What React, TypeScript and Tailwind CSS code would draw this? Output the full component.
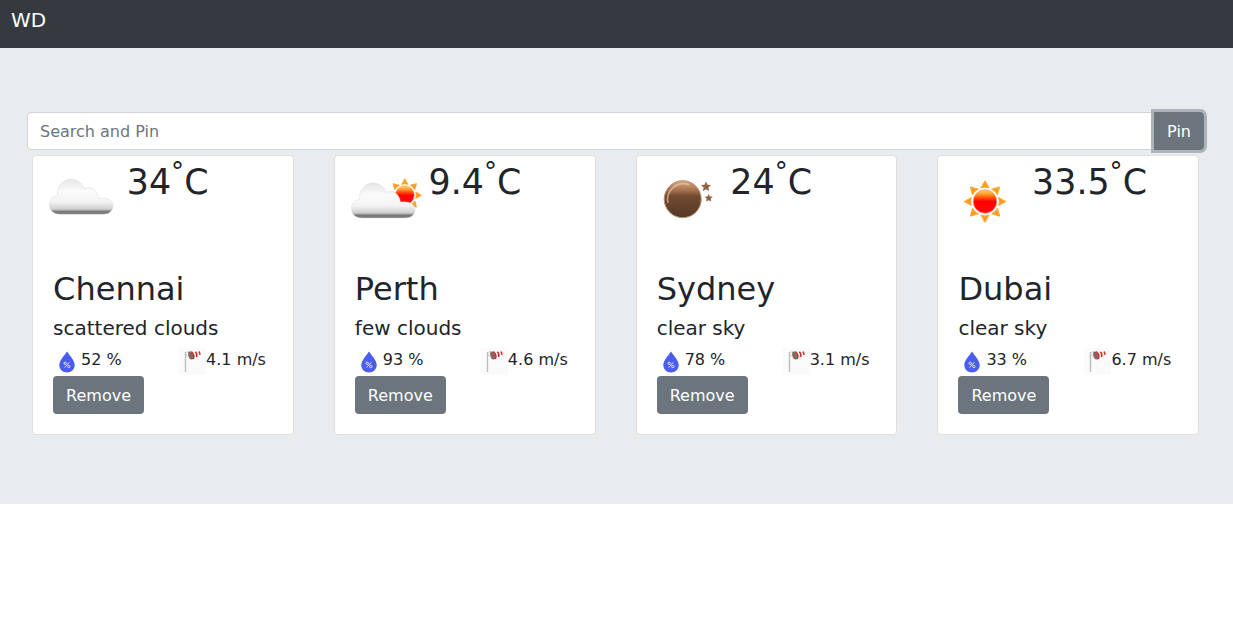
const cities = [
  { name: "Chennai", temp: "34", desc: "scattered clouds", hum: 52, wind: "4.1", icon: "cloud" },
  { name: "Perth", temp: "9.4", desc: "few clouds", hum: 93, wind: "4.6", icon: "few" },
  { name: "Sydney", temp: "24", desc: "clear sky", hum: 78, wind: "3.1", icon: "moon" },
  { name: "Dubai", temp: "33.5", desc: "clear sky", hum: 33, wind: "6.7", icon: "sun" },
];

const rays = [0, 45, 90, 135, 180, 225, 270, 315];

function Sun({ x, y, s }: { x: number; y: number; s: number }) {
  return (
    <g transform={`translate(${x} ${y}) scale(${s})`}>
      {rays.map((a) => (
        <path key={a} d="M-3.800 -13.800 L0 -20.500 L3.800 -13.800 Q0 -15.200 -3.800 -13.800Z" fill="#ff9914" stroke="#ffa83a" strokeWidth="1.300" strokeLinejoin="round" transform={`rotate(${a})`} />
      ))}
      <circle r="11.800" fill="url(#sunFill)" stroke="#ff9a78" strokeWidth="0.8" />
    </g>
  );
}

function Cloud({ x, y }: { x: number; y: number }) {
  return (
    <path
      transform={`translate(${x} ${y})`}
      d="M11 34.500 C4 34.500 0.500 30 0.500 25 C0.500 20 3.500 16.500 8.500 16 C8 6 14 -0.500 22 -0.500 C28.500 -0.500 33.500 4 35.500 9 C41 6 48.500 9.500 49.500 18.500 C58 17.200 64 20.500 64 26 C64 31 60 34.500 54 34.500 Z"
      fill="url(#cloudFill)"
      stroke="#cccccc"
      strokeOpacity="0.6"
      strokeWidth="0.6"
    />
  );
}

const starPath = "M0 -5 L1.500 -1.800 L5 -1.500 L2.400 .9 L3.200 4.400 L0 2.700 L-3.200 4.400 L-2.400 .9 L-5 -1.500 L-1.500 -1.800Z";

function WeatherIcon({ kind }: { kind: string }) {
  return (
    <svg width="100" height="100" viewBox="0 0 100 100" className="-ml-[5px] shrink-0">
      <defs>
        <linearGradient id="cloudFill" x1="0" y1="0" x2="0" y2="1">
          <stop offset="0" stopColor="#e6e6e6" />
          <stop offset="0.35" stopColor="#fbfbfb" />
          <stop offset="0.65" stopColor="#f3f3f3" />
          <stop offset="0.85" stopColor="#cfcfcf" />
          <stop offset="0.93" stopColor="#737373" />
          <stop offset="1" stopColor="#858585" />
        </linearGradient>
        <linearGradient id="sunFill" x1="0" y1="0" x2="0" y2="1">
          <stop offset="0" stopColor="#ffd670" />
          <stop offset="0.18" stopColor="#ffa12b" />
          <stop offset="0.38" stopColor="#ff3c06" />
          <stop offset="0.5" stopColor="#ff0000" />
          <stop offset="1" stopColor="#fa0b0b" />
        </linearGradient>
        <linearGradient id="moonFill" x1="0" y1="0" x2="0" y2="1">
          <stop offset="0" stopColor="#dba783" />
          <stop offset="0.28" stopColor="#a06d4a" />
          <stop offset="0.42" stopColor="#704a31" />
          <stop offset="1" stopColor="#573923" />
        </linearGradient>
      </defs>
      {kind === "cloud" && <Cloud x={21} y={23.800} />}
      {kind === "few" && (
        <>
          <Sun x={74.800} y={39.300} s={0.8} />
          <Cloud x={21} y={27.500} />
        </>
      )}
      {kind === "moon" && (
        <g>
          <circle cx="50.700" cy="43.200" r="18.500" fill="url(#moonFill)" stroke="#b98e70" strokeWidth="1" />
          <path d="M36 47 A15.800 15.800 0 0 1 57 28.800" fill="none" stroke="#ebc4a7" strokeWidth="1.600" strokeOpacity="0.7" />
          <path d={starPath} fill="#8b6448" transform="translate(74 30.500)" />
          <path d={starPath} fill="#8b6448" transform="translate(76.700 42) scale(.82)" />
        </g>
      )}
      {kind === "sun" && <Sun x={52} y={45.500} s={1} />}
    </svg>
  );
}

function Drop() {
  return (
    <svg width="28" height="28" viewBox="0 0 28 28" className="shrink-0">
      <path d="M14 4.500 C11.500 8.500 6.300 13.300 6.300 18 C6.300 22.500 9.800 25.500 14 25.500 C18.200 25.500 21.700 22.500 21.700 18 C21.700 13.300 16.500 8.500 14 4.500Z" fill="#4b5ded" />
      <g fill="none" stroke="#e3e6ff" strokeWidth="1">
        <circle cx="12.200" cy="16.300" r="1.200" />
        <circle cx="15.800" cy="19.500" r="1.200" />
        <path d="M16.300 15.300 L11.700 20.500" />
      </g>
    </svg>
  );
}

function Windsock() {
  return (
    <svg width="28" height="28" viewBox="0 0 28 28" className="shrink-0">
      <rect x="0.800" y="0.800" width="27.200" height="27.200" fill="#fafafa" />
      <path d="M7.500 5 V25" stroke="#bcbcbc" strokeWidth="1.300" />
      <path d="M7.500 5.500 L11 4.500 M7.500 6.500 L12 12" stroke="#b5b5b5" strokeWidth="0.6" />
      <ellipse cx="12.800" cy="8.500" rx="2.400" ry="4.200" transform="rotate(-18 12.800 8.500)" fill="#88665f" />
      <g fill="none" stroke="#cb2d29" strokeWidth="1.500">
        <path d="M13.300 4.500 Q17.300 8 15.300 12" />
        <path d="M17.300 4.800 Q19.600 7 18.600 10" />
        <path d="M20.800 4.500 Q22.300 6.200 21.800 8" />
      </g>
    </svg>
  );
}

export default function App() {
  return (
    <div className="font-['DejaVu_Sans',sans-serif] text-base leading-6 text-[#212529]">
      <nav className="h-12 bg-[#343a40] pt-[5px] pl-[11px] text-xl leading-[30px] text-white">WD</nav>
      <main className="h-[456px] bg-[#e9ecef] px-[27px] pt-16">
        <div className="flex h-[38px]">
          <input placeholder="Search and Pin" className="h-[38px] min-w-0 flex-1 rounded-l border border-[#ced4da] bg-white px-3 outline-none placeholder:text-[#6c757d]" />
          <button className="mr-[2px] -ml-px rounded-r border border-[#6c757d] bg-[#6c757d] px-3 pt-[2px] text-white shadow-[0_0_0_3px_#aeb3ba]">Pin</button>
        </div>
        <div className="mt-[5px] -mr-[33.2px] ml-[5.1px] grid grid-cols-4">
          {cities.map((c) => (
            <section key={c.name} className="mr-10 h-[280px] rounded border border-[#dfdfdf] bg-white">
              <div className="flex h-[100px]">
                <WeatherIcon kind={c.icon} />
                <div className="ml-[-1.3px] text-[34.8px] leading-[52px] whitespace-nowrap">
                  {c.temp}
                  <sup className="-top-[0.5em] text-[75%]">°</sup>C
                </div>
              </div>
              <div className="px-5 pt-[14px]">
                <h2 className="mb-2 text-[32px] leading-[38px]">{c.name}</h2>
                <p className="text-xl leading-6">{c.desc}</p>
                <div className="mt-[7px] flex h-[29px]">
                  <div className="flex w-[125px]">
                    <Drop />
                    <span className="pt-px">{c.hum} %</span>
                  </div>
                  <div className="flex whitespace-nowrap">
                    <Windsock />
                    <span className="pt-px">{c.wind} m/s</span>
                  </div>
                </div>
                <button className="h-[38px] rounded bg-[#6c757d] px-[13px] pt-[2px] text-white">Remove</button>
              </div>
            </section>
          ))}
        </div>
      </main>
    </div>
  );
}
